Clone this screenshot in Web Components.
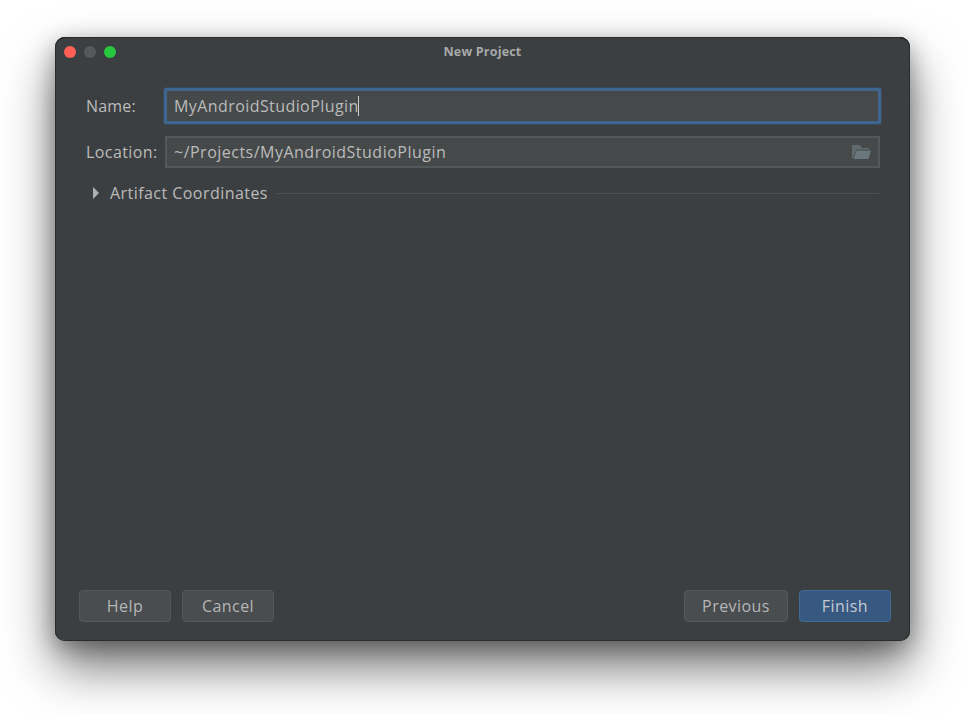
<!DOCTYPE html>
<html>
<head>
<meta charset="utf-8">
<title>New Project</title>
<style>
  html, body { margin: 0; height: 100%; background: #fff; overflow: hidden; }
  body { font-family: "Open Sans", "Noto Sans", sans-serif; }
</style>
</head>
<body>
<ide-dialog title-text="New Project">
  <form-row label="Name:" value="MyAndroidStudioPlugin" focused></form-row>
  <form-row label="Location:" value="~/Projects/MyAndroidStudioPlugin" browse></form-row>
  <collapse-row label="Artifact Coordinates"></collapse-row>
  <ide-button slot="left">Help</ide-button>
  <ide-button slot="left">Cancel</ide-button>
  <ide-button slot="right" wide>Previous</ide-button>
  <ide-button slot="right" primary>Finish</ide-button>
</ide-dialog>

<script>
class IdeDialog extends HTMLElement {
  constructor() {
    super();
    this.attachShadow({ mode: 'open' });
  }

  connectedCallback() {
    const title = this.getAttribute('title-text') || '';
    this.shadowRoot.innerHTML = `
      <style>
        :host {
          display: flex;
          flex-direction: column;
          box-sizing: border-box;
          width: 855px;
          height: 604px;
          margin: 37px 0 0 55px;
          background: #3c3f41;
          border-radius: 10px;
          box-shadow: inset 0 0 0 1px #2a2b2c, inset 0 1px 0 #141414, inset 0 -1px 0 #777,
            0 26px 50px rgba(0, 0, 0, .55), 0 6px 22px rgba(0, 0, 0, .3);
          color: #bbb;
        }
        .titlebar {
          position: relative;
          display: flex;
          align-items: center;
          justify-content: center;
          height: 29px;
          flex: none;
        }
        .title { font: 700 12.5px "Open Sans", sans-serif; letter-spacing: .2px; color: #a8a9aa; }
        .lights {
          position: absolute;
          left: 9px;
          top: 9px;
          display: flex;
          gap: 8px;
        }
        .lights i { width: 12px; height: 12px; border-radius: 50%; display: block; }
        .red { background: #fe5f57; }
        .grey { background: #57585a; }
        .green { background: #28c83f; }
        .content {
          flex: 1;
          display: flex;
          flex-direction: column;
          gap: 12px;
          padding: 22px 30px 0 31px;
        }
        .footer {
          display: flex;
          justify-content: space-between;
          padding: 0 19px 19px 24px;
        }
        .group { display: flex; gap: 11px; }
      </style>
      <div class="titlebar">
        <div class="lights"><i class="red"></i><i class="grey"></i><i class="green"></i></div>
        <span class="title">${title}</span>
      </div>
      <div class="content"><slot></slot></div>
      <div class="footer">
        <div class="group"><slot name="left"></slot></div>
        <div class="group"><slot name="right"></slot></div>
      </div>
    `;
  }
}

class FormRow extends HTMLElement {
  constructor() {
    super();
    this.attachShadow({ mode: 'open' });
  }

  connectedCallback() {
    const focused = this.hasAttribute('focused');
    const browse = this.hasAttribute('browse');
    this.shadowRoot.innerHTML = `
      <style>
        :host {
          display: flex;
          align-items: center;
          height: 32px;
          font: 16px "Open Sans", sans-serif;
          letter-spacing: .42px;
          color: #bbb;
        }
        :host([browse]) .value { letter-spacing: .49px; }
        :host([focused]) .label { letter-spacing: .2px; }
        .label { width: 79px; flex: none; }
        .field {
          flex: 1;
          box-sizing: border-box;
          height: 32px;
          display: flex;
          align-items: center;
          justify-content: space-between;
          padding: 0 7px;
          background: #45494a;
          border: 2px solid #55585a;
          white-space: nowrap;
        }
        :host([focused]) { height: 36px; }
        :host([focused]) .field {
          height: 36px;
          margin: 0 -1px 0 -1px;
          padding: 0 7px;
          border: 3px solid #3e6690;
          border-radius: 2px;
          box-shadow: 0 0 0 .5px rgba(62, 102, 144, .6);
        }
        .caret { display: inline-block; width: 1px; height: 20px; background: #ccc; vertical-align: -4px; margin-left: -1px; }
        svg { display: block; flex: none; }
      </style>
      <span class="label">${this.getAttribute('label')}</span>
      <div class="field">
        <span class="value">${this.getAttribute('value')}${focused ? '<span class="caret"></span>' : ''}</span>
        ${browse ? `<svg width="20" height="16" viewBox="0 0 20 16">
          <path d="M1 1h8l2 3h7v1.5H5.5L2 14H1z" fill="#5f6a6f"/>
          <path d="M5.5 6.5H20L17.5 15H2.5z" fill="#69767b"/>
        </svg>` : ''}
      </div>
    `;
  }
}

class CollapseRow extends HTMLElement {
  constructor() {
    super();
    this.attachShadow({ mode: 'open' });
  }

  connectedCallback() {
    this.shadowRoot.innerHTML = `
      <style>
        :host {
          display: flex;
          align-items: center;
          height: 26px;
          padding-right: 1px;
          font: 16px "Open Sans", sans-serif;
          letter-spacing: .45px;
          color: #bbb;
        }
        .arrow {
          width: 0;
          height: 0;
          margin: 0 11px 0 7px;
          border-left: 6px solid #afb1b3;
          border-top: 6px solid transparent;
          border-bottom: 6px solid transparent;
        }
        .line { flex: 1; height: 1px; background: #4e5254; margin-left: 8px; }
      </style>
      <span class="arrow"></span>
      <span>${this.getAttribute('label')}</span>
      <span class="line"></span>
    `;
  }
}

class IdeButton extends HTMLElement {
  constructor() {
    super();
    this.attachShadow({ mode: 'open' });
  }

  connectedCallback() {
    this.shadowRoot.innerHTML = `
      <style>
        :host {
          display: flex;
          align-items: center;
          justify-content: center;
          box-sizing: border-box;
          width: 92px;
          height: 32px;
          background: #494d4f;
          border: 1px solid #55585a;
          border-radius: 4px;
          font: 16px "Open Sans", sans-serif;
          letter-spacing: .45px;
          color: #b5b6b7;
        }
        :host([wide]) { width: 104px; }
        :host([primary]) {
          background: #375880;
          border-color: #436a94;
          color: #c4cbd3;
        }
      </style>
      <slot></slot>
    `;
  }
}

customElements.define('ide-dialog', IdeDialog);
customElements.define('form-row', FormRow);
customElements.define('collapse-row', CollapseRow);
customElements.define('ide-button', IdeButton);
</script>
</body>
</html>
